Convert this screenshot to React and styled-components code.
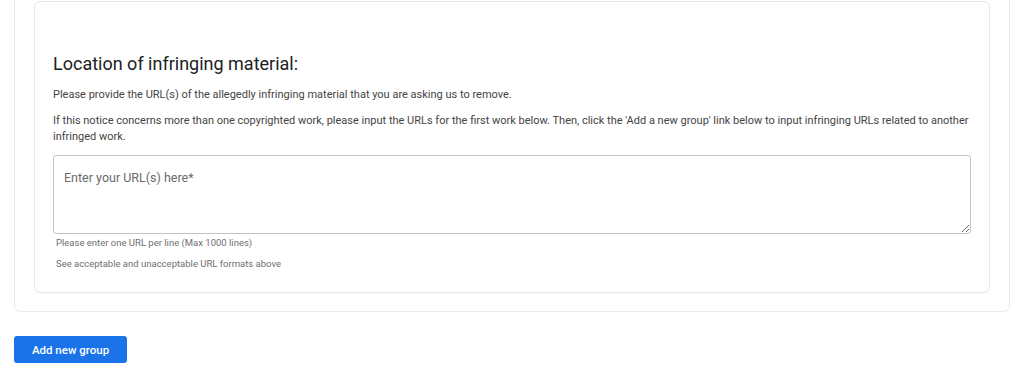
import { createGlobalStyle, styled } from 'styled-components';

const GlobalStyle = createGlobalStyle`
    body {
        margin: 0;
        background: #fff;
        font-family: Roboto, 'Liberation Sans', Arial, sans-serif;
        color: #3c4043;
    }
`;

const Page = styled.div`
    padding: 0 14px;
`;

const GroupCard = styled.div`
    border: 1px solid #ececec;
    border-top: none;
    border-radius: 0 0 6px 6px;
    padding: 1px 19px 18px;
`;

const Section = styled.div`
    border: 1px solid #e6e6e6;
    border-radius: 6px;
    padding: 50px 18px 22px 18px;
`;

const Heading = styled.h2`
    margin: 0 0 11px;
    font-size: 18px;
    line-height: 24px;
    font-weight: 400;
    color: #202124;
`;

const Text = styled.p`
    margin: 0 0 10px;
    font-size: 11px;
    line-height: 16px;
    color: #444;
`;

const UrlInput = styled.textarea`
    display: block;
    box-sizing: border-box;
    width: 100%;
    height: 79px;
    margin-top: 1px;
    padding: 14px 10px;
    border: 1px solid #c4c4c4;
    border-radius: 3px;
    font-family: inherit;
    font-size: 12.5px;
    line-height: 16px;
    color: #202124;
    resize: vertical;
    &::placeholder {
        color: #6b6b6b;
    }
`;

const Hint = styled.div`
    padding-left: 3px;
    margin-top: ${(props) => props.gap}px;
    font-size: 9.5px;
    line-height: 12px;
    color: #6f6f6f;
`;

const AddButton = styled.button`
    margin-top: 24px;
    width: 113px;
    height: 27px;
    border: none;
    border-radius: 3px;
    background: #1a73e8;
    color: #fff;
    font-family: inherit;
    font-size: 11.5px;
    font-weight: 500;
    cursor: pointer;
`;

export default function App() {
    return (
        <Page>
            <GlobalStyle />
            <GroupCard>
                <Section>
                    <Heading>Location of infringing material:</Heading>
                    <Text>
                        Please provide the URL(s) of the allegedly infringing
                        material that you are asking us to remove.
                    </Text>
                    <Text>
                        If this notice concerns more than one copyrighted work,
                        please input the URLs for the first work below. Then,
                        click the 'Add a new group' link below to input
                        infringing URLs related to another infringed work.
                    </Text>
                    <UrlInput placeholder="Enter your URL(s) here*" />
                    <Hint gap={3}>
                        Please enter one URL per line (Max 1000 lines)
                    </Hint>
                    <Hint gap={9}>
                        See acceptable and unacceptable URL formats above
                    </Hint>
                </Section>
            </GroupCard>
            <AddButton>Add new group</AddButton>
        </Page>
    );
}
